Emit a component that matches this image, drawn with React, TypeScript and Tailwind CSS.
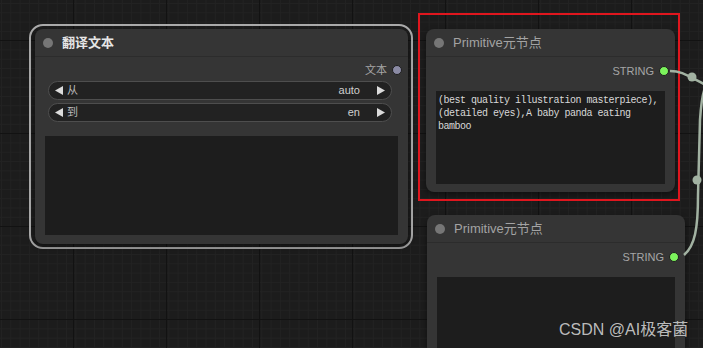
import React from 'react';

const font = "font-['Liberation_Sans','Noto_Sans_CJK_SC',sans-serif]";

const Triangle = ({ dir }: { dir: 'left' | 'right' }) => (
  <svg width="8" height="9" viewBox="0 0 8 9" className="shrink-0">
    {dir === 'left' ? <path d="M0 4.5 L8 0 L8 9 Z" fill="#dcdcdc" /> : <path d="M8 4.5 L0 0 L0 9 Z" fill="#dcdcdc" />}
  </svg>
);

const ComboWidget = ({ label, value }: { label: string; value: string }) => (
  <div className="flex h-[19px] items-center rounded-full border border-[#4e4e4e] bg-[#222222] pl-[6px] pr-[6px] text-[11px] text-[#cfcfcf]">
    <Triangle dir="left" />
    <span className="ml-[4px] text-[#bdbdbd]">{label}</span>
    <span className="ml-auto mr-[17px]">{value}</span>
    <Triangle dir="right" />
  </div>
);

const NodeTitle = ({ title, bold }: { title: string; bold?: boolean }) => (
  <div className="flex h-[28px] items-center border-b border-[#2c2c2c] pl-[8px]">
    <span className="h-[10px] w-[10px] rounded-full bg-[#767676]" />
    <span className={bold ? 'ml-[9px] text-[13px] font-bold text-[#e6e6e6]' : 'ml-[9px] text-[13px] text-[#a3a3a3]'}>
      {title}
    </span>
  </div>
);

const OutputRow = ({ label, dot }: { label: string; dot: string }) => (
  <div className="flex h-[16px] items-center justify-end gap-[5px] pr-[6px] text-[11px]">
    <span className="text-[#a6a6a6]">{label}</span>
    <span className={`h-[10px] w-[10px] rounded-full border-[1.5px] border-[#1e1e1e] ${dot}`} />
  </div>
);

const PrimitiveNode = ({ text, className }: { text?: string; className: string }) => (
  <div className={`absolute flex flex-col rounded-[8px] bg-[#353535] shadow-[0_3px_6px_rgba(0,0,0,0.45)] ${className}`}>
    <NodeTitle title="Primitive元节点" />
    <div className="mt-[6px]">
      <OutputRow label="STRING" dot="bg-[#7cf35c]" />
    </div>
    <div className="mx-[10px] mb-[8px] mt-[12px] flex-1 bg-[#1d1d1d] px-[2px] pt-[3px] font-['Liberation_Mono',monospace] text-[10px] leading-[13px] tracking-[-0.5px] text-[#d8d8d8]">
      {text}
    </div>
  </div>
);

export default function App() {
  return (
    <div
      className={`relative h-[348px] w-[703px] overflow-hidden bg-[#1c1c1c] ${font} bg-[linear-gradient(to_right,#121212_1px,transparent_1px),linear-gradient(to_bottom,#121212_1px,transparent_1px),linear-gradient(to_right,#222222_1px,transparent_1px),linear-gradient(to_bottom,#222222_1px,transparent_1px)] bg-[size:93px_93px,93px_93px,9.3px_9.3px,9.3px_9.3px] bg-[position:73px_0,0_40px,1px_0,0_3px]`}
    >
      {/* selection outline of the translate node */}
      <div className="absolute left-[29px] top-[24px] h-[225px] w-[384px] rounded-[14px] border-2 border-[#ababab]" />

      <div className="absolute left-[35px] top-[29px] flex h-[215px] w-[373px] flex-col rounded-[8px] bg-[#353535] shadow-[0_3px_6px_rgba(0,0,0,0.45)]">
        <NodeTitle title="翻译文本" bold />
        <div className="mt-[5px]">
          <OutputRow label="文本" dot="bg-[#8a8aa4]" />
        </div>
        <div className="mt-[3px] flex flex-col gap-[3px] pl-[13px] pr-[16px]">
          <ComboWidget label="从" value="auto" />
          <ComboWidget label="到" value="en" />
        </div>
        <div className="mx-[10px] mb-[9px] mt-[14px] flex-1 bg-[#1d1d1d]" />
      </div>

      <PrimitiveNode
        className="left-[426px] top-[29px] h-[163px] w-[249px]"
        text="(best quality illustration masterpiece),(detailed eyes),A baby panda eating bamboo"
      />
      <div className="absolute left-[418px] top-[13px] h-[188px] w-[262px] border-2 border-[#e0161e]" />

      <PrimitiveNode className="left-[427px] top-[215px] h-[150px] w-[258px]" />

      <svg className="pointer-events-none absolute left-0 top-0" width="703" height="348">
        <path d="M670 71 C682 71 688 76 704 84" stroke="#a2b2a2" strokeWidth="2.5" fill="none" />
        <circle cx="692" cy="77" r="4.5" fill="#a2b2a2" />
        <path d="M684 255 C695 246 698 228 698 195 L700 120 C701 105 702 95 705 88" stroke="#a2b2a2" strokeWidth="2.5" fill="none" />
        <circle cx="697" cy="180" r="4.5" fill="#a2b2a2" />
      </svg>

      <div className="absolute left-[559px] top-[318px] text-[16px] text-[#d0d0d0]/90">CSDN @AI极客菌</div>
    </div>
  );
}
